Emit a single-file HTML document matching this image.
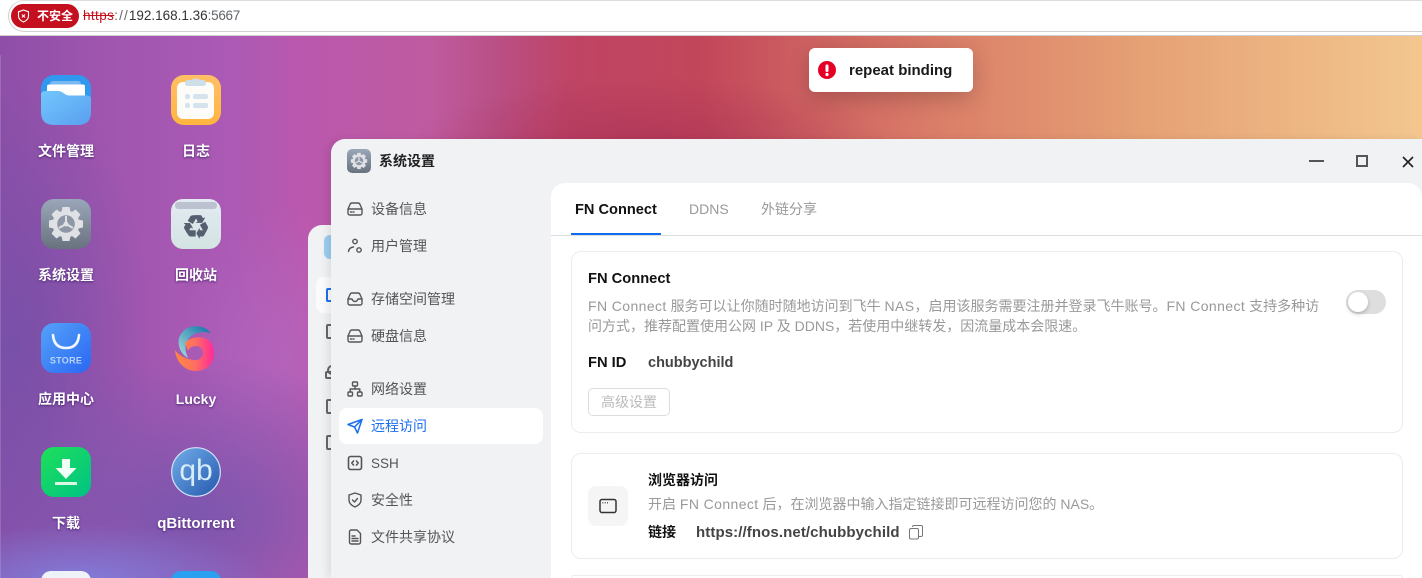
<!DOCTYPE html>
<html><head><meta charset="utf-8">
<style>
*{box-sizing:border-box;margin:0;padding:0}
html,body{width:1422px;height:578px;overflow:hidden;background:#fff}
body{font-family:"Liberation Sans","Noto Sans CJK SC",sans-serif}
#root{position:relative;width:1422px;height:578px;overflow:hidden}
.a{position:absolute;white-space:nowrap}
#bg{position:absolute;left:0;top:36px;width:1422px;height:542px;overflow:hidden;
background:
radial-gradient(ellipse 190px 60px at 80px 548px,rgba(128,128,222,.95),rgba(128,128,222,0) 100%),
radial-gradient(ellipse 270px 160px at 190px 480px,rgba(122,86,173,.95),rgba(122,86,173,0) 100%),
radial-gradient(ellipse 140px 270px at 15px 310px,rgba(116,80,168,.85),rgba(116,80,168,0) 100%),
radial-gradient(ellipse 100px 150px at 280px 320px,rgba(178,106,194,.6),rgba(178,106,194,0) 100%),
radial-gradient(ellipse 240px 70px at 650px 110px,rgba(165,45,85,.55),rgba(165,45,85,0) 100%),
linear-gradient(90deg,#8e4fa8 0,#9f55ae 100px,#ab5ab5 230px,#ba58ae 300px,#bf5ba0 430px,#b95086 495px,#bf4465 570px,#c2465a 700px,#cd5f60 800px,#db8069 950px,#e6a275 1150px,#f3c78f 1422px)}
.lbl{position:absolute;width:130px;text-align:center;color:#fff;font-size:14px;font-weight:700;line-height:20px;text-shadow:0 1px 2px rgba(60,25,100,.8)}
.ic{position:absolute;width:50px;height:50px}
.nav{position:absolute;left:371px;font-size:14px;line-height:20px;color:#555;white-space:nowrap}
.ni{position:absolute;left:347px;width:16px;height:16px;fill:none;stroke:#555;stroke-width:1.4;stroke-linejoin:round;stroke-linecap:round}
.l{letter-spacing:.4px}
</style></head><body><div id="root">

<div id="bg"></div>
<div class="a" style="left:0;top:55px;width:1px;height:523px;background:rgba(255,255,255,.15)"></div>

<!-- browser bar -->
<div class="a" style="left:0;top:0;width:1422px;height:36px;background:#fff;border-bottom:1px solid #d0d0d0"></div>
<div class="a" style="left:8px;top:0;width:1414px;height:32px;border:1px solid #cfcfcf;border-right:none;border-radius:16px 0 0 16px;border-top-color:#ddd"></div>
<div class="a" style="left:11px;top:4px;width:68px;height:24px;border-radius:12px;background:#c40f1e"></div>
<svg class="a" style="left:17px;top:9px" width="13" height="14" viewBox="0 0 13 14" fill="none" stroke="#fff" stroke-width="1.1"><path d="M6.5 1 11.5 2.8V7c0 3-2.2 4.8-5 6-2.800-1.200-5-3-5-6V2.800Z"/><path d="M5 5.500l3 3M8 5.500l-3 3"/></svg>
<div class="a" style="left:37px;top:7px;font-size:12px;line-height:18px;font-weight:700;color:#fff">不安全</div>
<div class="a" style="left:83px;top:7px;font-size:13.5px;line-height:18px;color:#5f6368"><span style="color:#c40f1e;text-decoration:line-through;letter-spacing:.4px">https</span><span style="color:#666;letter-spacing:1.1px">://</span><span style="color:#333">192.168.1.36</span><span style="letter-spacing:-.3px">:5667</span></div>

<!-- desktop icons -->
<svg class="ic" style="left:41px;top:75px" viewBox="0 0 50 50"><defs><linearGradient id="f1" x1="0" y1="0" x2="1" y2="1"><stop offset="0" stop-color="#72c6fd"/><stop offset="1" stop-color="#5a9fef"/></linearGradient></defs><rect width="50" height="50" rx="13" fill="#3098ee"/><rect x="9" y="6" width="31" height="14" rx="3" fill="#7ab8f2"/><rect x="6" y="9.500" width="38" height="14" rx="2" fill="#fff"/><path d="M0 20q0-4 4-4h13q3 0 6 2.500 3 2 5 2h18q4 0 4 3.500v13q0 13-13 13H13Q0 50 0 37Z" fill="url(#f1)"/></svg>
<div class="lbl" style="left:1px;top:141px">文件管理</div>

<svg class="ic" style="left:171px;top:75px" viewBox="0 0 50 50"><defs><linearGradient id="o1" x1="0" y1="0" x2="0" y2="1"><stop offset="0" stop-color="#ffbf66"/><stop offset="1" stop-color="#ffb53e"/></linearGradient></defs><rect width="50" height="50" rx="13" fill="url(#o1)"/><rect x="6" y="7" width="37" height="37" rx="6" fill="#fdfcf8"/><path d="M14 8q0-3 3-3h3q5-3 9 0h3q3 0 3 3t-3 3H17q-3 0-3-3Z" fill="#cfdfea"/><rect x="14" y="19" width="5" height="5" rx="2" fill="#d5e3ee"/><rect x="22" y="19" width="15" height="5" rx="2" fill="#d5e3ee"/><rect x="14" y="28" width="5" height="5" rx="2" fill="#d5e3ee"/><rect x="22" y="28" width="15" height="5" rx="2" fill="#d5e3ee"/></svg>
<div class="lbl" style="left:131px;top:141px">日志</div>

<svg class="ic" style="left:41px;top:199px" viewBox="0 0 50 50"><defs><linearGradient id="g1" x1="0" y1="0" x2="0" y2="1"><stop offset="0" stop-color="#9aa7b9"/><stop offset="1" stop-color="#69727f"/></linearGradient></defs><rect width="50" height="50" rx="13" fill="url(#g1)"/><g transform="translate(25 25)"><g fill="#e0e1e5"><path d="M-3.500-17h7l1 5h-9Z"/><path d="M-3.500-17h7l1 5h-9Z" transform="rotate(45)"/><path d="M-3.500-17h7l1 5h-9Z" transform="rotate(90)"/><path d="M-3.500-17h7l1 5h-9Z" transform="rotate(135)"/><path d="M-3.500-17h7l1 5h-9Z" transform="rotate(180)"/><path d="M-3.500-17h7l1 5h-9Z" transform="rotate(225)"/><path d="M-3.500-17h7l1 5h-9Z" transform="rotate(270)"/><path d="M-3.500-17h7l1 5h-9Z" transform="rotate(315)"/><circle r="13.500"/></g><circle r="8.800" fill="#8d97a6"/><path d="M0-8V0M0 0 7 4M0 0-7 4" stroke="#e0e1e5" stroke-width="2"/><circle r="2.400" fill="#e0e1e5"/></g></svg>
<div class="lbl" style="left:1px;top:265px">系统设置</div>

<svg class="ic" style="left:171px;top:199px" viewBox="0 0 50 50"><defs><linearGradient id="t1" x1="0" y1="0" x2="0" y2="1"><stop offset="0" stop-color="#e3ebf2"/><stop offset="1" stop-color="#d3e3e2"/></linearGradient></defs><rect width="50" height="50" rx="12" fill="url(#t1)"/><rect x="4" y="3" width="42" height="7" rx="3" fill="#bcc2d0"/><text x="25" y="39" font-size="32" text-anchor="middle" fill="#565f70" stroke="#565f70" stroke-width=".7" font-family="DejaVu Sans">♻</text></svg>
<div class="lbl" style="left:131px;top:265px">回收站</div>

<svg class="ic" style="left:41px;top:323px" viewBox="0 0 50 50"><defs><linearGradient id="s1" x1="0" y1="0" x2="1" y2="1"><stop offset="0" stop-color="#55a2f9"/><stop offset="1" stop-color="#2a67f3"/></linearGradient></defs><rect width="50" height="50" rx="13" fill="url(#s1)"/><path d="M12 12q1 13 13 13t13-13" fill="none" stroke="#f2f7ff" stroke-width="2.600" stroke-linecap="round"/><text x="25" y="40.500" font-size="9" font-weight="700" text-anchor="middle" fill="#b9d3fb" font-family="Liberation Sans" letter-spacing=".3">STORE</text></svg>
<div class="lbl" style="left:1px;top:389px">应用中心</div>

<svg class="ic" style="left:171px;top:323px" viewBox="0 0 50 50"><defs><linearGradient id="l1" x1="0" y1="0" x2="1" y2="0"><stop offset="0" stop-color="#ff8a3d"/><stop offset=".5" stop-color="#ff7060"/><stop offset="1" stop-color="#ff2a9a"/></linearGradient><linearGradient id="l2" x1="0" y1="1" x2="1" y2="0"><stop offset="0" stop-color="#a8e0d8"/><stop offset="1" stop-color="#0d6fa8"/></linearGradient></defs><path d="M40 10C33 1 14-1 8 15 6 24 11 32 17 35 14 28 13 22 18 15 23 9 32 8 40 10Z" fill="url(#l2)"/><path d="M14 20C20 12 43 10 43 30 43 41 35 48 25 48 13 48 5 38 4 27 8 33 16 37 25 37 29 37 32 34 32 30 32 26 29 23 25 23 21 23 18 25 17 28Z" fill="url(#l1)"/></svg>
<div class="lbl" style="left:131px;top:389px">Lucky</div>

<svg class="ic" style="left:41px;top:447px" viewBox="0 0 50 50"><defs><linearGradient id="d1" x1="0" y1="0" x2="1" y2="1"><stop offset="0" stop-color="#1ee05a"/><stop offset="1" stop-color="#00c284"/></linearGradient></defs><rect width="50" height="50" rx="13" fill="url(#d1)"/><path d="M21 12h8v9h6.500L25 32 14.500 21H21Z" fill="#f1fff6"/><rect x="14" y="35" width="22" height="3" fill="#d8f8e4"/></svg>
<div class="lbl" style="left:1px;top:513px">下载</div>

<svg class="ic" style="left:171px;top:447px" viewBox="0 0 50 50"><defs><linearGradient id="q1" x1="0" y1="0" x2="1" y2="1"><stop offset="0" stop-color="#72aeea"/><stop offset="1" stop-color="#2458ad"/></linearGradient></defs><circle cx="25" cy="25" r="24.300" fill="url(#q1)" stroke="#d5e2f5" stroke-width="1.200"/><text x="25" y="33" font-size="30" text-anchor="middle" fill="#d7ecfb" font-family="Liberation Sans">qb</text></svg>
<div class="lbl" style="left:131px;top:514px;font-size:15px">qBittorrent</div>

<div class="a" style="left:41px;top:571px;width:50px;height:20px;border-radius:13px;background:#eef3fa"></div>
<div class="a" style="left:171px;top:571px;width:50px;height:20px;border-radius:13px;background:#2b9ff0"></div>

<!-- back window -->
<div class="a" style="left:308px;top:225px;width:60px;height:353px;background:#f1f2f4;border-radius:14px 0 0 0"></div>
<div class="a" style="left:324px;top:235px;width:24px;height:24px;border-radius:6px;background:#9ccdf0"></div>
<div class="a" style="left:316px;top:277px;width:40px;height:36px;border-radius:8px;background:#fbfbfc"></div>
<div class="a" style="left:326px;top:288px;width:10px;height:14px;border:2px solid #1a6ff0;border-radius:2px"></div>
<div class="a" style="left:326px;top:324px;width:10px;height:15px;border:2px solid #666;border-radius:2px"></div>
<div class="a" style="left:325px;top:371px;width:10px;height:8px;border:2px solid #666;border-radius:2px"></div>
<div class="a" style="left:327px;top:365px;width:10px;height:10px;border:2px solid #666;border-radius:50%"></div>
<div class="a" style="left:326px;top:399px;width:10px;height:15px;border:2px solid #666;border-radius:2px"></div>
<div class="a" style="left:326px;top:435px;width:10px;height:15px;border:2px solid #666;border-radius:2px"></div>

<!-- main window -->
<div class="a" style="left:331px;top:139px;width:1091px;height:439px;background:#f1f2f4;border-radius:14px 0 0 0;box-shadow:-4px 0 8px rgba(0,0,0,.08)"></div>

<svg class="a" style="left:347px;top:149px" width="24" height="24" viewBox="0 0 50 50"><rect width="50" height="50" rx="11" fill="url(#g1)"/><g transform="translate(25 25)"><g fill="#e0e1e5"><path d="M-3.500-17h7l1 5h-9Z"/><path d="M-3.500-17h7l1 5h-9Z" transform="rotate(45)"/><path d="M-3.500-17h7l1 5h-9Z" transform="rotate(90)"/><path d="M-3.500-17h7l1 5h-9Z" transform="rotate(135)"/><path d="M-3.500-17h7l1 5h-9Z" transform="rotate(180)"/><path d="M-3.500-17h7l1 5h-9Z" transform="rotate(225)"/><path d="M-3.500-17h7l1 5h-9Z" transform="rotate(270)"/><path d="M-3.500-17h7l1 5h-9Z" transform="rotate(315)"/><circle r="13.500"/></g><circle r="8.800" fill="#8d97a6"/><path d="M0-8V0M0 0 7 4M0 0-7 4" stroke="#e0e1e5" stroke-width="2.500"/></g></svg>
<div class="a" style="left:379px;top:151px;font-size:14px;line-height:20px;font-weight:700;color:#222">系统设置</div>

<div class="a" style="left:1309px;top:160px;width:15px;height:2px;background:#555"></div>
<div class="a" style="left:1356px;top:155px;width:12px;height:12px;border:2px solid #555"></div>
<svg class="a" style="left:1402px;top:156px" width="12" height="12" viewBox="0 0 12 12" stroke="#222" stroke-width="1.600"><path d="M1 1 11 11M11 1 1 11"/></svg>

<!-- sidebar -->
<svg class="ni" style="top:201px" viewBox="0 0 16 16"><path d="M1 8 3 3.500Q3.500 2 5 2h6q1.500 0 2 1.500L15 8v4q0 2-2 2H3q-2 0-2-2ZM1 8h14"/><path d="M3.500 11h1M6 11h1"/></svg>
<div class="nav" style="top:199px">设备信息</div>
<svg class="ni" style="top:238px" viewBox="0 0 16 16"><circle cx="8" cy="3.500" r="2.200"/><path d="M1.500 13.500q.5-4 5-4.500"/><circle cx="12" cy="12" r="2.200"/></svg>
<div class="nav" style="top:236px">用户管理</div>
<svg class="ni" style="top:291px" viewBox="0 0 16 16"><path d="M1 8 3 3.500Q3.500 2 5 2h6q1.500 0 2 1.500L15 8v4q0 2-2 2H3q-2 0-2-2Z"/><path d="M1 8h4q1 2.500 3 2.500T11 8h4"/></svg>
<div class="nav" style="top:289px">存储空间管理</div>
<svg class="ni" style="top:328px" viewBox="0 0 16 16"><path d="M1 8 3 3.500Q3.500 2 5 2h6q1.500 0 2 1.500L15 8v4q0 2-2 2H3q-2 0-2-2ZM1 8h14"/><path d="M3.500 11h1M6 11h1"/></svg>
<div class="nav" style="top:326px">硬盘信息</div>
<svg class="ni" style="top:381px" viewBox="0 0 16 16"><rect x="5.500" y="1" width="5" height="4" rx="1"/><rect x="1" y="11" width="4.500" height="4" rx="1"/><rect x="10.500" y="11" width="4.500" height="4" rx="1"/><path d="M8 5v3M3.200 11V8h9.600v3"/></svg>
<div class="nav" style="top:379px">网络设置</div>

<div class="a" style="left:339px;top:408px;width:204px;height:36px;background:#fff;border-radius:8px"></div>
<svg class="ni" style="top:418px;stroke:#1a6ff0;stroke-width:1.500" viewBox="0 0 16 16"><path d="M1 6.500 15 1.500 10.500 15 7.500 9Z"/><path d="M7.500 9 15 1.500"/></svg>
<div class="nav" style="top:416px;color:#1a6ff0">远程访问</div>

<svg class="ni" style="top:455px;stroke-width:1.600" viewBox="0 0 16 16"><rect x="1.500" y="1.500" width="13" height="13" rx="2"/><path d="M6.500 6 4.800 8l1.700 2M9.500 6l1.700 2-1.700 2"/></svg>
<div class="nav" style="top:454px;font-size:13.5px">SSH</div>
<svg class="ni" style="top:492px" viewBox="0 0 16 16"><path d="M8 1 14 3V8q0 4.500-6 7-6-2.500-6-7V3Z"/><path d="M5.500 8 7.500 10l3-3.500"/></svg>
<div class="nav" style="top:490px">安全性</div>
<svg class="ni" style="top:529px" viewBox="0 0 16 16"><path d="M2.500 3q0-2 2-2H10l3.500 3.500V13q0 2-2 2h-7q-2 0-2-2Z"/><path d="M5 7h3M5 9.500h6M5 12h6"/></svg>
<div class="nav" style="top:527px">文件共享协议</div>

<!-- content -->
<div class="a" style="left:551px;top:183px;width:871px;height:395px;background:#fff;border-radius:14px 14px 0 0"></div>
<div class="a" style="left:551px;top:235px;width:871px;height:1px;background:#dedede"></div>
<div class="a" style="left:571px;top:233px;width:90px;height:2px;background:#0f6ef0"></div>
<div class="a" style="left:575px;top:200px;font-size:14.6px;line-height:20px;font-weight:700;color:#111">FN Connect</div>
<div class="a" style="left:689px;top:199px;font-size:14px;line-height:20px;color:#999">DDNS</div>
<div class="a" style="left:761px;top:199px;font-size:14px;line-height:20px;color:#999">外链分享</div>

<div class="a" style="left:571px;top:251px;width:832px;height:182px;border:1px solid #ececec;border-radius:10px"></div>
<div class="a" style="left:588px;top:269px;font-size:14.7px;line-height:20px;font-weight:700;color:#111">FN Connect</div>
<div class="a" style="left:588px;top:296px;font-size:14px;line-height:20px;color:#999"><span class="l">FN Connect</span> 服务可以让你随时随地访问到飞牛 <span class="l">NAS</span>，启用该服务需要注册并登录飞牛账号。<span class="l">FN Connect</span> 支持多种访</div>
<div class="a" style="left:588px;top:316px;font-size:14px;line-height:20px;color:#999">问方式，推荐配置使用公网 IP 及 DDNS，若使用中继转发，因流量成本会限速。</div>
<div class="a" style="left:588px;top:353px;font-size:14.7px;line-height:20px;font-weight:700;color:#111">FN ID</div>
<div class="a" style="left:648px;top:353px;font-size:14.5px;line-height:20px;font-weight:700;color:#444">chubbychild</div>
<div class="a" style="left:588px;top:388px;width:82px;height:28px;border:1px solid #ddd;border-radius:5px;font-size:14px;line-height:26px;text-align:center;color:#bbb">高级设置</div>

<div class="a" style="left:1346px;top:290px;width:40px;height:24px;border-radius:12px;background:#dedede"></div>
<div class="a" style="left:1348px;top:292px;width:20px;height:20px;border-radius:50%;background:#fff;box-shadow:0 2px 4px rgba(0,0,0,.2)"></div>

<div class="a" style="left:571px;top:453px;width:832px;height:106px;border:1px solid #ececec;border-radius:10px"></div>
<div class="a" style="left:588px;top:486px;width:40px;height:40px;border-radius:8px;background:#f5f5f5"></div>
<svg class="a" style="left:599px;top:498px" width="18" height="16" viewBox="0 0 18 16" fill="none" stroke="#333" stroke-width="1.500"><rect x="1" y="1.500" width="16" height="13" rx="2"/><path d="M3.500 4.800h.8M5.800 4.800h.8M8 4.800h.8"/></svg>
<div class="a" style="left:648px;top:470px;font-size:14px;line-height:20px;font-weight:700;color:#111">浏览器访问</div>
<div class="a" style="left:648px;top:494px;font-size:14px;line-height:20px;color:#999">开启 <span class="l">FN Connect</span> 后，在浏览器中输入指定链接即可远程访问您的 NAS。</div>
<div class="a" style="left:648px;top:522px;font-size:14px;line-height:20px;font-weight:700;color:#111">链接</div>
<div class="a" style="left:696px;top:523px;font-size:15px;line-height:20px;font-weight:700;color:#444;letter-spacing:.1px">https://fnos.net/chubbychild</div>
<svg class="a" style="left:909px;top:525px" width="14" height="15" viewBox="0 0 14 15" fill="none" stroke="#777" stroke-width="1"><rect x=".5" y="3.500" width="9" height="10.500" rx="1.500"/><path d="M3.500 2q0-1.500 1.500-1.500h7q1.500 0 1.500 1.500v8q0 1.500-1.500 1.500h-2"/></svg>

<div class="a" style="left:571px;top:575px;width:832px;height:3px;border:1px solid #ececec;border-bottom:none;border-radius:10px 10px 0 0"></div>

<!-- toast -->
<div class="a" style="left:809px;top:48px;width:164px;height:44px;background:#fff;border-radius:6px;box-shadow:0 6px 22px rgba(0,0,0,.2)"></div>
<svg class="a" style="left:818px;top:61px" width="18" height="18" viewBox="0 0 18 18"><circle cx="9" cy="9" r="9" fill="#e60026"/><rect x="7.500" y="3.500" width="3" height="7.500" rx="1.200" fill="#fff"/><circle cx="9" cy="13.500" r="1.600" fill="#fff"/></svg>
<div class="a" style="left:849px;top:61px;font-size:15px;line-height:20px;font-weight:700;color:#1a1a1a">repeat binding</div>

</div></body></html>
